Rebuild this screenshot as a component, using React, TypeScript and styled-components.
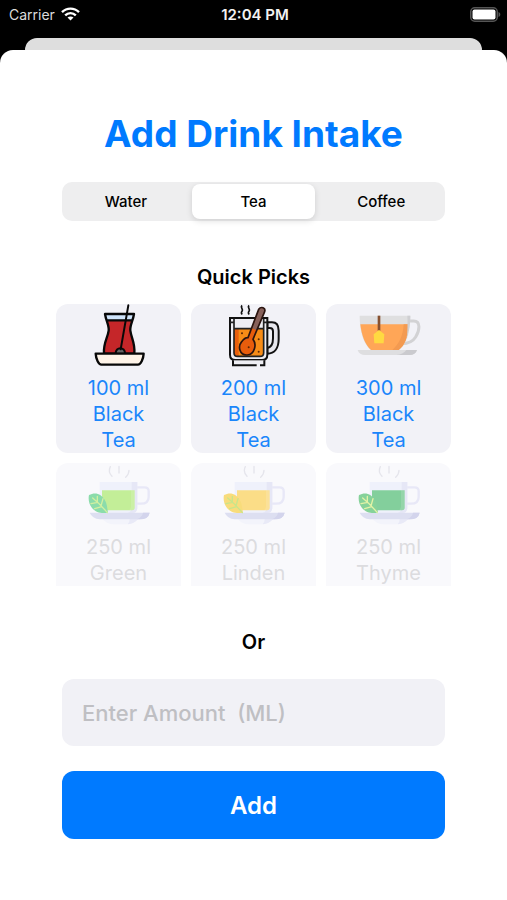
import React, { useState } from "react";
import styled, { createGlobalStyle } from "styled-components";

const GlobalStyle = createGlobalStyle`
  *, *::before, *::after { box-sizing: border-box; }
  body {
    margin: 0;
    background: #000;
    font-family: Inter, "Liberation Sans", sans-serif;
    color: #000;
  }
  button, input { font: inherit; color: inherit; }
`;

const Screen = styled.div`
  display: flex;
  flex-direction: column;
  min-height: 100vh;
  background: #000;
`;

const StatusBar = styled.header`
  display: grid;
  grid-template-columns: 1fr auto 1fr;
  align-items: center;
  height: 28px;
  padding: 0 6px 0 9px;
  color: #fff;
  font-size: 14px;
`;

const Carrier = styled.div`
  display: flex;
  align-items: center;
  gap: 6px;
  color: #dcdcdc;
`;

const Clock = styled.time`
  font-size: 15px;
  font-weight: 600;
  color: #f2f2f2;
`;

const BatterySlot = styled.div`
  display: flex;
  justify-content: flex-end;
`;

const CardBehind = styled.div`
  height: 12px;
  margin: 10px 25px 0;
  border-radius: 12px 12px 0 0;
  background: #dedede;
`;

const Sheet = styled.main`
  flex: 1;
  display: flex;
  flex-direction: column;
  padding: 60px 56px 56px;
  border-radius: 13px 13px 0 0;
  background: #fff;
`;

const Title = styled.h1`
  margin: 0;
  font-size: 37px;
  line-height: 48px;
  font-weight: 700;
  text-align: center;
  color: #007aff;
`;

const Segments = styled.fieldset`
  display: grid;
  grid-template-columns: repeat(3, 1fr);
  gap: 4px;
  margin: 24px 6px 0;
  padding: 2px;
  border: 0;
  border-radius: 10px;
  background: #eeeeef;
`;

const Segment = styled.label<{ $selected: boolean }>`
  display: flex;
  align-items: center;
  justify-content: center;
  height: 35px;
  border-radius: 8px;
  font-size: 15px;
  font-weight: 500;
  background: ${(p) => (p.$selected ? "#fff" : "transparent")};
  box-shadow: ${(p) => (p.$selected ? "0 2px 6px rgba(0, 0, 0, 0.13)" : "none")};
  cursor: pointer;
`;

const SegmentInput = styled.input`
  appearance: none;
  width: 0;
  height: 0;
  margin: 0;
`;

const Heading = styled.h2<{ $top: number; $bottom: number }>`
  margin: ${(p) => p.$top}px 0 ${(p) => p.$bottom}px;
  font-size: 20px;
  line-height: 28px;
  font-weight: 600;
  text-align: center;
`;

const Picks = styled.div`
  display: grid;
  grid-template-columns: repeat(3, 1fr);
  gap: 10px;
  height: 282px;
  overflow: hidden;
`;

const Pick = styled.button`
  display: flex;
  flex-direction: column;
  align-items: center;
  height: 149px;
  padding: 0 28px;
  border: 0;
  border-radius: 12px;
  background: #f2f2f7;
  color: #1a86fb;
  font-size: 20px;
  line-height: 26px;
  cursor: pointer;

  &:disabled {
    background: #f9f9fc;
    color: #dcdcdf;
    cursor: default;
  }
`;

const PickIcon = styled.svg`
  flex: none;
  width: 64px;
  height: 64px;
  margin-bottom: 7px;
`;

const AmountInput = styled.input`
  width: auto;
  min-width: 0;
  height: 67px;
  margin: 0 6px;
  padding: 0 20px;
  border: 0;
  border-radius: 12px;
  background: #f1f1f6;
  font-size: 22px;
  font-weight: 500;

  &::placeholder { color: #bfbfc3; opacity: 1; }
`;

const AddButton = styled.button`
  height: 68px;
  margin: 25px 6px 0;
  border: 0;
  border-radius: 12px;
  background: #007aff;
  color: #fff;
  font-size: 24px;
  font-weight: 600;
  cursor: pointer;
`;

function WifiIcon() {
  return (
    <svg width="19" height="14" viewBox="0 0 19 14" fill="none" stroke="#fff" strokeWidth="2.4" aria-hidden="true">
      <path d="M1 5.2C5.8.4 13.2.4 18 5.2" />
      <path d="M4.2 8.4c3-3 7.6-3 10.6 0" />
      <path d="M9.5 13.6 6.5 10.6c1.7-1.6 4.3-1.6 6 0z" fill="#fff" stroke="none" />
    </svg>
  );
}

function BatteryIcon() {
  return (
    <svg width="31" height="15" viewBox="0 0 31 15" aria-hidden="true">
      <rect x=".75" y=".75" width="26.5" height="13.5" rx="4" fill="none" stroke="#555" strokeWidth="1.5" />
      <rect x="2.5" y="2.5" width="23" height="10" rx="2" fill="#fff" />
      <path d="M28.5 5c2.4.8 2.4 4.200 0 5z" fill="#555" />
    </svg>
  );
}

function TeaGlass() {
  return (
    <PickIcon viewBox="0 0 192 192" aria-hidden="true">
      <path d="M54 30H141C138 50 128 65 130 80c3 22 15 38 12 69H51c-3-31 11-47 14-69 2-15-8-30-11-50z" fill="#c52629" />
      <path d="M54 30H141L136 49H59z" fill="#cfe4fb" />
      <path d="M54 30H141C138 50 128 65 130 80c3 22 15 38 12 69H51c-3-31 11-47 14-69 2-15-8-30-11-50zM58 49H137" fill="none" stroke="#080808" strokeWidth="7" strokeLinejoin="round" />
      <path d="M86 149c0-22 28-22 28 0z" fill="#666" stroke="#080808" strokeWidth="6" />
      <path d="M124 4 101 136" stroke="#080808" strokeWidth="6" strokeLinecap="round" />
      <path d="M26 149H170C169 166 161 182 153 182H43C35 182 27 166 26 149z" fill="#fff4e8" stroke="#080808" strokeWidth="7" strokeLinejoin="round" />
    </PickIcon>
  );
}

function TeaMug() {
  return (
    <PickIcon viewBox="0 0 192 192" aria-hidden="true">
      <path d="M136 55H150C164 55 170 65 170 80V105C170 132 158 149 136 149V132C148 130 153 120 153 103V82C153 75 150 72 143 72H136z" fill="#e6e6ec" stroke="#111" strokeWidth="6" />
      <path d="M24 42H136V152Q136 168 120 168H40Q24 168 24 152z" fill="#eeeef3" stroke="#111" strokeWidth="6" />
      <path d="M36 74H125V146Q125 157 114 157H47Q36 157 36 146z" fill="#f78c16" />
      <path d="M36 74H50V157H47Q36 157 36 146z" fill="#e95f0b" />
      <path d="M36 44V146Q36 157 47 157H114Q125 157 125 146V44M36 74H125M24 55H36M125 55H136" fill="none" stroke="#222" strokeWidth="5" />
      <path d="M33 169H127V184H33z" fill="#eeeef3" />
      <path d="M33 169V184H104M114 184H127V169" fill="none" stroke="#111" strokeWidth="6" />
      <path d="M110 16C117 6 132 11 128 23L93 106C105 120 98 151 76 153C52 155 47 127 59 113C66 104 71 100 78 101z" fill="#e85d0c" />
      <path d="M110 16C117 6 132 11 128 23L105 79 90 73z" fill="#87615a" />
      <path d="M110 16C117 6 132 11 128 23L93 106C105 120 98 151 76 153C52 155 47 127 59 113C66 104 71 100 78 101z" fill="none" stroke="#2b1510" strokeWidth="5" strokeLinejoin="round" />
      <path d="M60 4c-7 8 6 11 0 18-3 4-2 7 1 9M81 4c-7 8 6 11 0 18-3 4-2 7 1 9" fill="none" stroke="#111" strokeWidth="5" />
      <g fill="#5a2605"><circle cx="60" cy="88" r="3" /><circle cx="110" cy="106" r="3" /><circle cx="110" cy="143" r="3" /><circle cx="80" cy="130" r="3" /></g>
    </PickIcon>
  );
}

function TeaCup() {
  return (
    <PickIcon viewBox="0 0 192 192" aria-hidden="true">
      <path d="M154 51H170C192 51 188 80 176 99C165 117 150 119 134 119" fill="none" stroke="#d2d2d4" strokeWidth="9" />
      <path d="M8 35H160C160 91 146 124 125 138H42C21 121 8 87 8 35z" fill="#dfdfe0" />
      <path d="M10 61H156C152 101 143 125 125 138H42C25 124 14 96 10 61z" fill="#ffa657" />
      <path d="M140 61H156C152 101 143 125 125 138H106C126 120 138 96 140 61z" fill="#f39a51" />
      <path d="M151 35H160Q160 72 149 101Q153 75 151 35z" fill="#cfcfd2" />
      <path d="M66 35V80" stroke="#87502f" strokeWidth="8" />
      <path d="M66 78 82 91 80 118H52L50 91z" fill="#ffd941" />
      <path d="M2 138H180C177 148 169 153 158 153H24C13 153 5 148 2 138z" fill="#dedee0" />
      <path d="M119 153Q138 151 148 138H180C177 148 169 153 158 153z" fill="#cacace" />
    </PickIcon>
  );
}

interface HerbalCupProps {
  liquid: string;
  leaf: string;
  vein: string;
}

function HerbalCup({ liquid, leaf, vein }: HerbalCupProps) {
  return (
    <PickIcon viewBox="0 0 192 192" aria-hidden="true">
      <path d="M70 11Q62 27 75 40M96 10V30M126 22Q126 34 116 43" fill="none" stroke="#e5e5ec" strokeWidth="4" strokeLinecap="round" />
      <path d="M147 73H172Q185 73 185 84V101Q185 122 162 122H147" fill="none" stroke="#e8e8f7" strokeWidth="7" />
      <path d="M38 57H151V133Q151 150 136 150H53Q38 150 38 133z" fill="#eff1fb" />
      <path d="M134 57H151V133Q151 150 136 150H122Q134 146 134 132z" fill="#e6e7f6" />
      <path d="M45 82H143V134Q143 142 135 142H45z" fill={liquid} />
      <path d="M132 82H143V134Q143 142 135 142H126Q132 137 132 130z" fill="#fff" fillOpacity=".14" />
      <path d="M47 168H153Q139 184 119 184H80Q60 184 47 168z" fill="#f3f4fb" />
      <path d="M128 168H153Q142 183 122 184Q128 178 128 168z" fill="#e9eaf7" />
      <path d="M8 149H188Q184 169 158 169H38Q16 167 8 149z" fill="#dddff1" />
      <path d="M149 169Q166 162 168 149H188Q184 169 158 169z" fill="#d3d4ec" />
      <path d="M6 96C26 85 44 94 53 110C62 125 60 137 63 149C46 152 27 150 15 135C6 124 3 108 6 96z" fill={leaf} />
      <path d="M17 105Q37 121 61 149M31 117V100M42 129 48 107M32 118 12 122M44 131 23 137" fill="none" stroke={vein} strokeWidth="4" strokeLinecap="round" />
    </PickIcon>
  );
}

const tabs = ["Water", "Tea", "Coffee"];

const picks = [
  { label: "100 ml Black Tea", icon: <TeaGlass />, enabled: true },
  { label: "200 ml Black Tea", icon: <TeaMug />, enabled: true },
  { label: "300 ml Black Tea", icon: <TeaCup />, enabled: true },
  { label: "250 ml Green Tea", icon: <HerbalCup liquid="#c3ee98" leaf="#8bdcab" vein="#d2f0a0" />, enabled: false },
  { label: "250 ml Linden Tea", icon: <HerbalCup liquid="#fbdd87" leaf="#f8dc7b" vein="#c8e58a" />, enabled: false },
  { label: "250 ml Thyme Tea", icon: <HerbalCup liquid="#83cf9c" leaf="#86d29a" vein="#e3f3a6" />, enabled: false },
];

export default function App() {
  const [tab, setTab] = useState("Tea");
  const [amount, setAmount] = useState("");

  return (
    <Screen>
      <GlobalStyle />
      <StatusBar>
        <Carrier>
          Carrier
          <WifiIcon />
        </Carrier>
        <Clock>12:04 PM</Clock>
        <BatterySlot>
          <BatteryIcon />
        </BatterySlot>
      </StatusBar>
      <CardBehind />
      <Sheet>
        <Title>Add Drink Intake</Title>
        <Segments aria-label="Drink type">
          {tabs.map((name) => (
            <Segment key={name} $selected={tab === name}>
              <SegmentInput type="radio" name="drink" checked={tab === name} onChange={() => setTab(name)} />
              {name}
            </Segment>
          ))}
        </Segments>
        <Heading $top={42} $bottom={13}>Quick Picks</Heading>
        <Picks>
          {picks.map((pick) => (
            <Pick key={pick.label} type="button" disabled={!pick.enabled}>
              {pick.icon}
              {pick.label}
            </Pick>
          ))}
        </Picks>
        <Heading $top={42} $bottom={23}>Or</Heading>
        <AmountInput
          aria-label="Enter amount in millilitres"
          inputMode="numeric"
          placeholder={"Enter Amount\u00a0 (ML)"}
          value={amount}
          onChange={(e) => setAmount(e.target.value)}
        />
        <AddButton type="button">Add</AddButton>
      </Sheet>
    </Screen>
  );
}
